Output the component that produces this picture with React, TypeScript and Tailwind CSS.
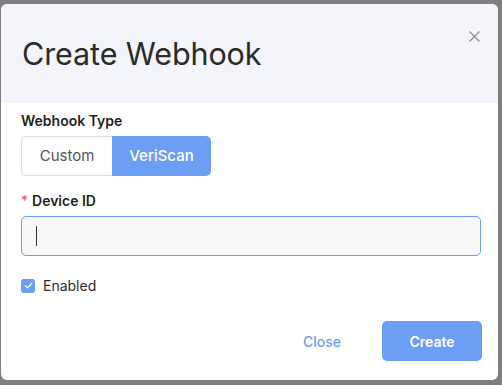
import React from 'react';

export default function App() {
  return (
    <div
      className="w-[502px] h-[385px] bg-[#7f7f7f] pt-[4px] pl-[1px] overflow-hidden"
      style={{ fontFamily: 'Inter, "Noto Sans", sans-serif' }}
    >
      <div className="relative w-[497px] h-[376px] bg-white rounded-[6px] overflow-hidden flex flex-col">
        {/* Header */}
        <div className="h-[99px] bg-[#f4f5fa] flex items-center px-[21px] pt-[2px]">
          <h2 className="text-[30.5px] leading-none text-[#2b2b2b] font-normal tracking-[-0.1px]">
            Create Webhook
          </h2>
        </div>
        <button className="absolute top-[25px] right-[17px] w-[14px] h-[14px] flex items-center justify-center text-[#8a8a8a]">
          <svg width="11" height="11" viewBox="0 0 11 11" fill="none" stroke="currentColor" strokeWidth="1.1">
            <path d="M0.5 0.5 L10.5 10.5 M10.5 0.5 L0.5 10.5" />
          </svg>
        </button>

        {/* Body */}
        <div className="flex flex-col px-[20px] pt-[8px]">
          <label className="text-[14px] leading-[20px] font-semibold text-[#1f1f1f]">Webhook Type</label>
          <div className="mt-[5px] flex w-[190px] h-[40px]">
            <button className="w-[91px] h-full border border-[#dcdcdc] border-r-0 rounded-l-[5px] bg-white text-[15px] text-[#555]">
              Custom
            </button>
            <button className="w-[99px] h-full rounded-r-[5px] bg-[#6c9ef6] text-[15px] font-medium text-white">
              VeriScan
            </button>
          </div>

          <label className="mt-[15px] text-[14px] leading-[20px] font-semibold text-[#1f1f1f] flex items-center gap-[4px]">
            <span className="text-[#e05858] font-normal">*</span>
            Device ID
          </label>
          <div className="mt-[5px] w-[460px] h-[40px] rounded-[5px] border border-[#6c9ef6] bg-[#f7f7f7] flex items-center pl-[14px]">
            <span className="w-px h-[20px] bg-[#333]" />
          </div>

          <label className="mt-[19px] flex items-center gap-[8px] text-[14px] text-[#2b2b2b]">
            <span className="w-[14px] h-[14px] rounded-[3px] bg-[#6c9ef6] flex items-center justify-center">
              <svg width="9" height="7" viewBox="0 0 9 7" fill="none" stroke="white" strokeWidth="1.2">
                <path d="M1 3.5 L3.5 6 L8 1" />
              </svg>
            </span>
            Enabled
          </label>
        </div>

        {/* Footer */}
        <div className="mt-auto mb-[19px] flex justify-end items-center pr-[16px] gap-[20px]">
          <button className="w-[80px] h-[40px] text-[14px] font-medium text-[#6c9ef6]">Close</button>
          <button className="w-[100px] h-[40px] rounded-[5px] bg-[#6c9ef6] text-[14px] font-semibold text-white">
            Create
          </button>
        </div>
      </div>
    </div>
  );
}
